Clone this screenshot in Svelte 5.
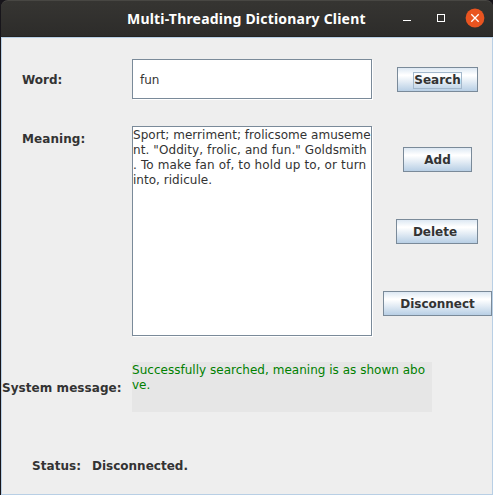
<script>
  const meaning = [
    { text: 'Sport; merriment; frolicsome amuseme', spacing: 0.025 },
    { text: 'nt. "Oddity, frolic, and fun." Goldsmith', spacing: 0.09 },
    { text: '. To make fan of, to hold up to, or turn', spacing: 0.13 },
    { text: 'into, ridicule.', spacing: 0.03 }
  ];
  const message = ['Successfully searched, meaning is as shown abo', 've.'];
</script>

<div class="window">
  <header>
    <h1>Multi-Threading Dictionary Client</h1>
    <div class="controls">
      <svg width="90" height="28" viewBox="0 0 90 28">
        <path d="M0 16.5h8" stroke="#fff" />
        <rect x="34.5" y="10.5" width="7" height="7" fill="none" stroke="#fff" />
        <circle cx="72" cy="14" r="9.4" fill="#e95420" />
        <path d="M68.3 10.3l7.4 7.4M75.7 10.3l-7.4 7.4" stroke="#fff" stroke-width="1.3" />
      </svg>
    </div>
  </header>
  <main>
    <div class="top">
      <div class="form">
        <div class="row word">
          <b class="label"><span>Word:</span></b>
          <div class="field"><span class="fun">fun</span></div>
        </div>
        <div class="row meaning">
          <b class="label"><span>Meaning:</span></b>
          <div class="field">
            {#each meaning as line}<div class="line" style="letter-spacing: {line.spacing}px">{line.text}</div>{/each}
          </div>
        </div>
      </div>
      <div class="buttons">
        <button class="search"><span>Search</span></button>
        <button class="add"><span>Add</span></button>
        <button class="delete"><span>Delete</span></button>
        <button class="disconnect"><span>Disconnect</span></button>
      </div>
    </div>
    <div class="system">
      <b><span>System message:</span></b>
      <div class="output">
        {#each message as line}<div class="line">{line}</div>{/each}
      </div>
    </div>
    <div class="status"><b class="key"><span>Status:</span></b><b><span>Disconnected.</span></b></div>
  </main>
</div>

<style>
  :global(body) { margin: 0; background: #17151a; }
  .window {
    box-sizing: border-box;
    width: 493px;
    height: 495px;
    padding-left: 1px;
    overflow: hidden;
    background: #17151a;
    color: #333;
    font: 12px/15px "DejaVu Sans", sans-serif;
  }
  header {
    box-sizing: border-box;
    display: flex;
    height: 37px;
    padding-left: 126px;
    border-top: 1px solid #484743;
    border-bottom: 1px solid #242321;
    border-radius: 7px 7px 0 0;
    background: linear-gradient(#363532, #2d2c2a);
  }
  h1 {
    width: 276px;
    margin: 0;
    color: #fff;
    font: bold 14px/35px "Noto Sans", sans-serif;
    letter-spacing: 0.2px;
    white-space: nowrap;
  }
  .controls { padding-top: 3px; }
  svg { display: block; }
  main {
    box-sizing: border-box;
    height: 458px;
    border: 1px solid #b8cfe5;
    background: #eee;
  }
  .top { display: flex; height: 324px; }
  .form { width: 381px; padding-top: 21px; }
  .row { display: flex; }
  .label { width: 110px; padding-left: 20px; }
  .word .label { padding-top: 14px; }
  .word .field { height: 40px; }
  .meaning { margin-top: 27px; }
  .meaning .label { padding-top: 6px; letter-spacing: 0.07px; }
  .meaning .field { height: 210px; padding-top: 1px; }
  .field {
    box-sizing: border-box;
    width: 240px;
    border: 1px solid #7a8a99;
    background: #fff;
    box-shadow: 1px 1px #fff;
  }
  .fun { display: block; padding: 13px 0 0 7px; }
  .line { height: 15px; white-space: pre; }
  .buttons { padding-top: 29px; width: 109px; }
  button {
    display: block;
    box-sizing: border-box;
    height: 25px;
    padding: 1px 0 0;
    border: 1px solid #7a8a99;
    border-radius: 0;
    background: linear-gradient(#dde8f3 0, #fff 30%, #fff 33%, #b8cfe5 100%);
    color: #333;
    font: bold 12px/15px "DejaVu Sans", sans-serif;
  }
  button span { position: relative; top: 0.5px; }
  .search { width: 81px; margin-left: 14px; }
  .search span { display: block; width: 47px; margin: 0 auto; outline: 1px solid #a3b8cc; }
  .add { width: 69px; margin: 55px 0 0 20px; }
  .delete { width: 82px; margin: 47px 0 0 13px; }
  .delete span { margin-right: 4px; }
  .disconnect { width: 109px; margin-top: 47px; }
  .system { display: flex; height: 50px; }
  .system > b { width: 130px; padding-top: 19px; letter-spacing: 0.06px; white-space: nowrap; }
  .output {
    box-sizing: border-box;
    width: 300px;
    padding-top: 1px;
    background: #e6e6e6;
    color: #008000;
    letter-spacing: 0.02px;
  }
  .status { display: flex; padding: 47px 0 0 30px; }
  .key { width: 60px; letter-spacing: 0.06px; }
</style>
